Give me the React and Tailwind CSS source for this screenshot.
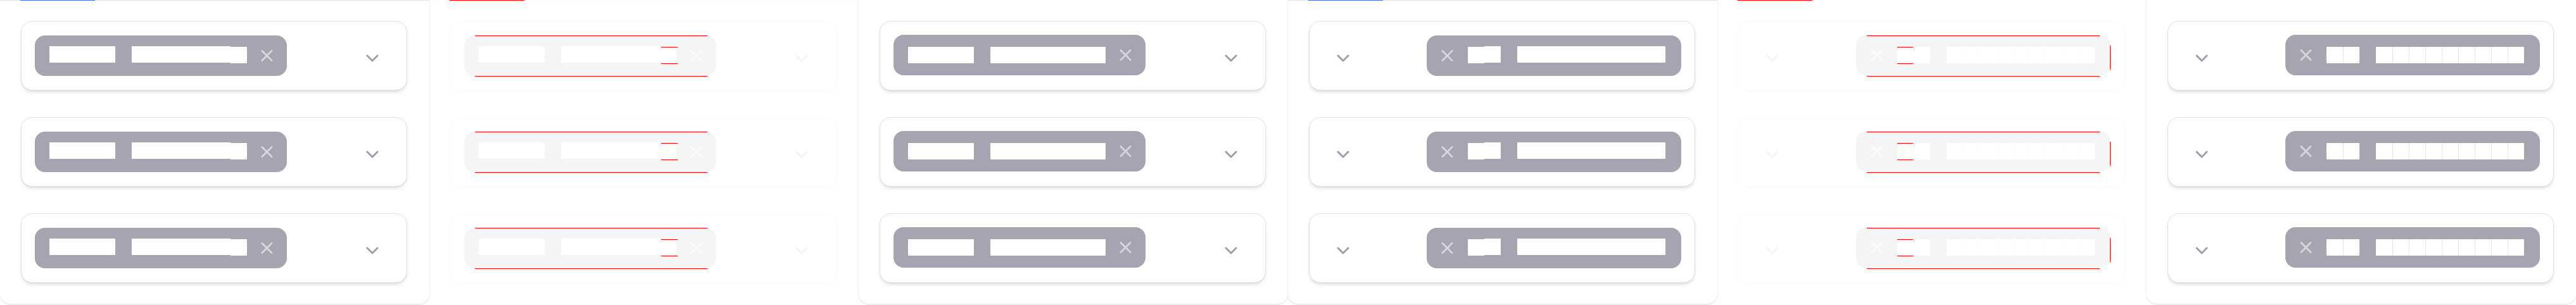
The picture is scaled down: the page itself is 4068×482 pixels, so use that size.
const ROWS = [0, 1, 2];

const Glyphs = ({ count, seams, shifted }) => (
  <div className="flex">
    {Array.from({ length: count }).map((_, i) => (
      <span
        key={i}
        className={
          'block w-[26px] h-[26px] bg-white ' +
          (seams && i > 0 ? 'border-l border-[#e6e6e8] ' : '') +
          (shifted === i ? 'translate-y-[1px]' : '')
        }
      />
    ))}
  </div>
);

const CloseIcon = () => (
  <svg width="21" height="20" viewBox="0 0 21 20" className="shrink-0 text-[#d7d6dc]">
    <path d="M3 2.5 18 17.5M18 2.5 3 17.5" stroke="currentColor" strokeWidth="3" strokeLinecap="round" fill="none" />
  </svg>
);

const Chevron = () => (
  <svg width="20" height="12" viewBox="0 0 20 12" className="shrink-0 mt-2 text-[#9e9daa]">
    <polyline points="2,2 10,10 18,2" stroke="currentColor" strokeWidth="3" strokeLinecap="round" strokeLinejoin="round" fill="none" />
  </svg>
);

const Card = ({ rtl, variant }) => {
  const isNew = variant === 'new';
  const chip = rtl ? (
    <div className={'flex items-center h-16 rounded-2xl bg-[#a5a4b0] pl-[22px] pr-[25px] ' + (isNew ? 'mb-[2px]' : '')}>
      <CloseIcon />
      <div className={'flex gap-[26px] ml-[22px] ' + (isNew ? '' : 'mb-[4px]')}>
        <Glyphs count={2} seams={isNew} shifted={isNew ? -1 : 0} />
        <Glyphs count={9} seams={isNew} />
      </div>
    </div>
  ) : (
    <div className={'flex items-center h-16 rounded-2xl bg-[#a5a4b0] pl-[23px] pr-[21px] ' + (isNew ? 'mb-[2px]' : '')}>
      <div className={'flex gap-[26px] ' + (isNew ? '' : 'mb-[4px]')}>
        <Glyphs count={4} />
        <Glyphs count={7} shifted={isNew ? -1 : 6} />
      </div>
      <div className="ml-[21px]">
        <CloseIcon />
      </div>
    </div>
  );

  return (
    <div
      className={
        'ml-[33px] w-[610px] h-[110px] flex items-center bg-white border border-[#e0e0e2] rounded-[18px] shadow-md ' +
        (rtl ? 'pl-[43px] pr-[21px]' : 'pl-[21px] pr-[44px]')
      }
    >
      {rtl ? (
        <>
          <Chevron />
          <div className="ml-auto">{chip}</div>
        </>
      ) : (
        <>
          {chip}
          <div className="ml-auto">
            <Chevron />
          </div>
        </>
      )}
    </div>
  );
};

const Frame = ({ rtl, variant }) => (
  <div className="w-[678px] h-[480px] bg-white rounded-b-2xl shadow-[0_1px_3px_rgba(0,0,0,0.14)]">
    {variant === 'new' ? (
      <div className="h-px" />
    ) : (
      <div className="h-px bg-[#e3e3e5]">
        <div className="ml-[32px] w-[118px] h-px bg-[#4a6bd9]" />
      </div>
    )}
    <div className="flex flex-col gap-[42px] pt-[32px]">
      {ROWS.map((r) => (
        <Card key={r} rtl={rtl} variant={variant} />
      ))}
    </div>
  </div>
);

const Red = ({ className }) => <div className={'absolute bg-[#ff0000] ' + className} />;

const DiffPanel = ({ rtl }) => (
  <div className="relative w-[678px] h-[482px] shrink-0">
    <div className="opacity-10">
      <Frame rtl={rtl} variant={rtl ? 'new' : 'old'} />
    </div>
    <Red className="top-0 left-[32px] w-[118px] h-px" />
    {ROWS.map((r) => {
      const off = r * 152;
      return (
        <div key={r} className="absolute left-0 w-full" style={{ top: off }}>
          {rtl ? (
            <>
              <Red className="top-[56px] left-[236px] w-[368px] h-px" />
              <Red className="top-[120px] left-[236px] w-[368px] h-px" />
              <Red className="top-[72px] left-[620px] w-px h-[38px]" />
              <Red className="top-[74px] left-[284px] w-[25px] h-px" />
              <Red className="top-[100px] left-[284px] w-[25px] h-px" />
            </>
          ) : (
            <>
              <Red className="top-[56px] left-[72px] w-[367px] h-px" />
              <Red className="top-[120px] left-[72px] w-[367px] h-px" />
              <Red className="top-[74px] left-[366px] w-[26px] h-px" />
              <Red className="top-[100px] left-[366px] w-[26px] h-px" />
            </>
          )}
        </div>
      );
    })}
  </div>
);

const Panel = ({ rtl, variant }) => (
  <div className="w-[678px] h-[482px] shrink-0">
    <Frame rtl={rtl} variant={variant} />
  </div>
);

export default function App() {
  return (
    <div className="flex w-[4068px] h-[482px] bg-white overflow-hidden font-['Liberation_Sans',sans-serif]">
      <Panel variant="old" />
      <DiffPanel />
      <Panel variant="new" />
      <Panel rtl variant="old" />
      <DiffPanel rtl />
      <Panel rtl variant="new" />
    </div>
  );
}
